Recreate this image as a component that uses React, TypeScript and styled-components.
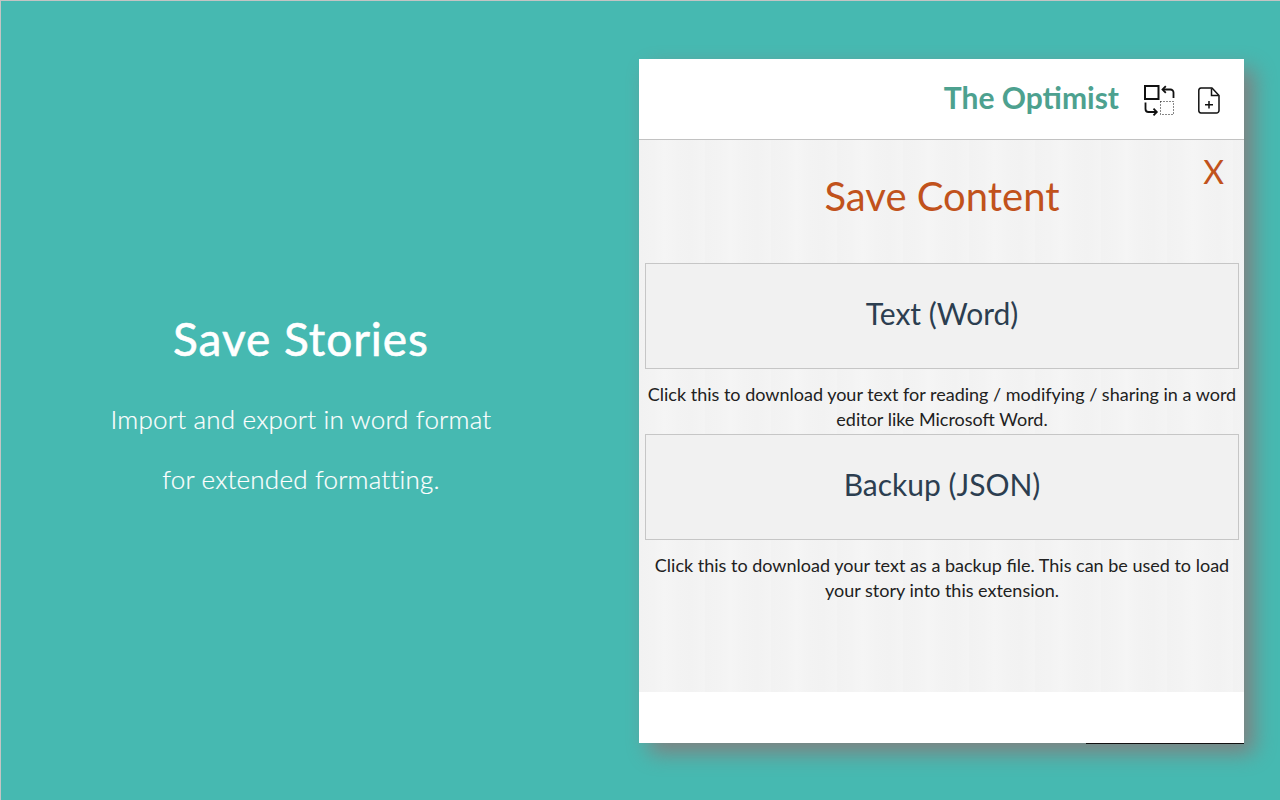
import styled, { createGlobalStyle } from "styled-components";

const GlobalStyle = createGlobalStyle`
  html, body {
    margin: 0;
    padding: 0;
    height: 100%;
    background: #46b9b1;
    font-family: Lato, "Open Sans", sans-serif;
  }
`;

const Page = styled.div`
  box-sizing: border-box;
  width: 1280px;
  height: 800px;
  overflow: hidden;
  display: flex;
  align-items: flex-start;
  background: #46b9b1;
  border-top: 1px solid #c4c4c4;
  border-left: 1px solid #c4c4c4;
`;

const Intro = styled.section`
  width: 600px;
  margin-top: 311px;
  text-align: center;
  color: #fff;
`;

const IntroTitle = styled.h1`
  margin: 0 0 23px;
  font-size: 46px;
  line-height: 54px;
  font-weight: 400;
  letter-spacing: 0.95px;
  -webkit-text-stroke: 0.6px #fff;
`;

const IntroLine = styled.p`
  margin: 0;
  font-size: 26px;
  line-height: 60px;
  font-weight: 300;
  letter-spacing: 0.2px;
  -webkit-text-stroke: 0.2px #fff;
`;

const Panel = styled.main`
  width: 605px;
  height: 684px;
  margin: 58px 0 0 38px;
  display: flex;
  flex-direction: column;
  background: #fff;
  box-shadow: 10px 10px 20px #808080;
  position: relative;
`;

const Header = styled.header`
  height: 81px;
  flex: none;
  box-sizing: border-box;
  display: flex;
  align-items: center;
  justify-content: flex-end;
  padding: 0 24px 0 0;
  border-bottom: 1px solid #c2c2c2;
`;

const Brand = styled.span`
  font-size: 30px;
  font-weight: 700;
  color: #4da18f;
  margin-right: 25px;
  position: relative;
  top: -2px;
`;

const IconButton = styled.button<{ $gap?: number }>`
  border: 0;
  padding: 2px 0 0;
  background: none;
  display: flex;
  margin-right: ${(p) => p.$gap ?? 0}px;
`;

const Content = styled.div`
  height: 552px;
  flex: none;
  box-sizing: border-box;
  padding: 0 5px 0 6px;
  position: relative;
  background: repeating-linear-gradient(
    90deg,
    #f2f2f2 0,
    #f3f3f3 14px,
    #f5f5f5 26px,
    #f3f3f3 38px,
    #f2f2f2 52px,
    #f4f4f4 66px
  );
`;

const Close = styled.span`
  position: absolute;
  top: 13px;
  right: 20px;
  font-size: 32px;
  line-height: 38px;
  color: #c1521c;
`;

const Title = styled.h2`
  margin: 0;
  padding: 32px 0 43px;
  font-size: 40px;
  line-height: 48px;
  font-weight: 400;
  text-align: center;
  color: #c1521c;
`;

const OptionButton = styled.button`
  display: block;
  box-sizing: border-box;
  width: 100%;
  height: 106px;
  background: #f1f1f1;
  border: 1px solid #c6c6c6;
  font-family: inherit;
  font-size: 30px;
  color: #2c3e50;
  padding: 0 0 6px;
`;

const OptionHelp = styled.p`
  margin: 0;
  padding: 13px 0 2px;
  font-size: 18px;
  line-height: 25px;
  color: #212121;
  text-align: center;
`;

const Footer = styled.footer`
  flex: 1;
  background: #fff;
`;

const BottomRule = styled.div`
  position: absolute;
  right: 0;
  bottom: -1px;
  width: 158px;
  height: 1px;
  background: #111;
`;

const SwapIcon = () => (
  <svg width="31" height="31" viewBox="0 0 31 31" fill="none" stroke="#111" strokeWidth="1.8">
    <rect x="1" y="1" width="13.500" height="13" strokeWidth="2" />
    <rect x="16.500" y="16.500" width="13" height="13" strokeWidth="1" strokeDasharray="1 2" />
    <path d="M29.500 13V7.500a3 3 0 0 0-3-3H19" />
    <path d="M21.800 1.200 18.500 4.500l3.300 3.300" />
    <path d="M1.500 17.500v6.500a3 3 0 0 0 3 3H12" />
    <path d="M9.500 23.700 12.800 27l-3.300 3.300" />
  </svg>
);

const NewFileIcon = () => (
  <svg width="22" height="27" viewBox="0 0 22 27" fill="none" stroke="#111" strokeWidth="1.5">
    <path d="M3 1h11l7 7.500V23.500a2.500 2.500 0 0 1-2.500 2.500H3A2.500 2.500 0 0 1 .8 23.500V3.500A2.500 2.500 0 0 1 3 1z" strokeLinejoin="round" />
    <path d="M13.500 1.500V8.500h7" />
    <path d="M11 14v7.500M7 17.750h8" />
  </svg>
);

const App = () => (
  <Page>
    <GlobalStyle />
    <Intro>
      <IntroTitle>Save Stories</IntroTitle>
      <IntroLine>Import and export in word format</IntroLine>
      <IntroLine>for extended formatting.</IntroLine>
    </Intro>
    <Panel>
      <Header>
        <Brand>The Optimist</Brand>
        <IconButton $gap={23}>
          <SwapIcon />
        </IconButton>
        <IconButton>
          <NewFileIcon />
        </IconButton>
      </Header>
      <Content>
        <Close>X</Close>
        <Title>Save Content</Title>
        <OptionButton>Text (Word)</OptionButton>
        <OptionHelp>
          Click this to download your text for reading / modifying / sharing in a word editor like Microsoft Word.
        </OptionHelp>
        <OptionButton>Backup (JSON)</OptionButton>
        <OptionHelp>
          Click this to download your text as a backup file. This can be used to load your story into this extension.
        </OptionHelp>
      </Content>
      <Footer />
      <BottomRule />
    </Panel>
  </Page>
);

export default App;
